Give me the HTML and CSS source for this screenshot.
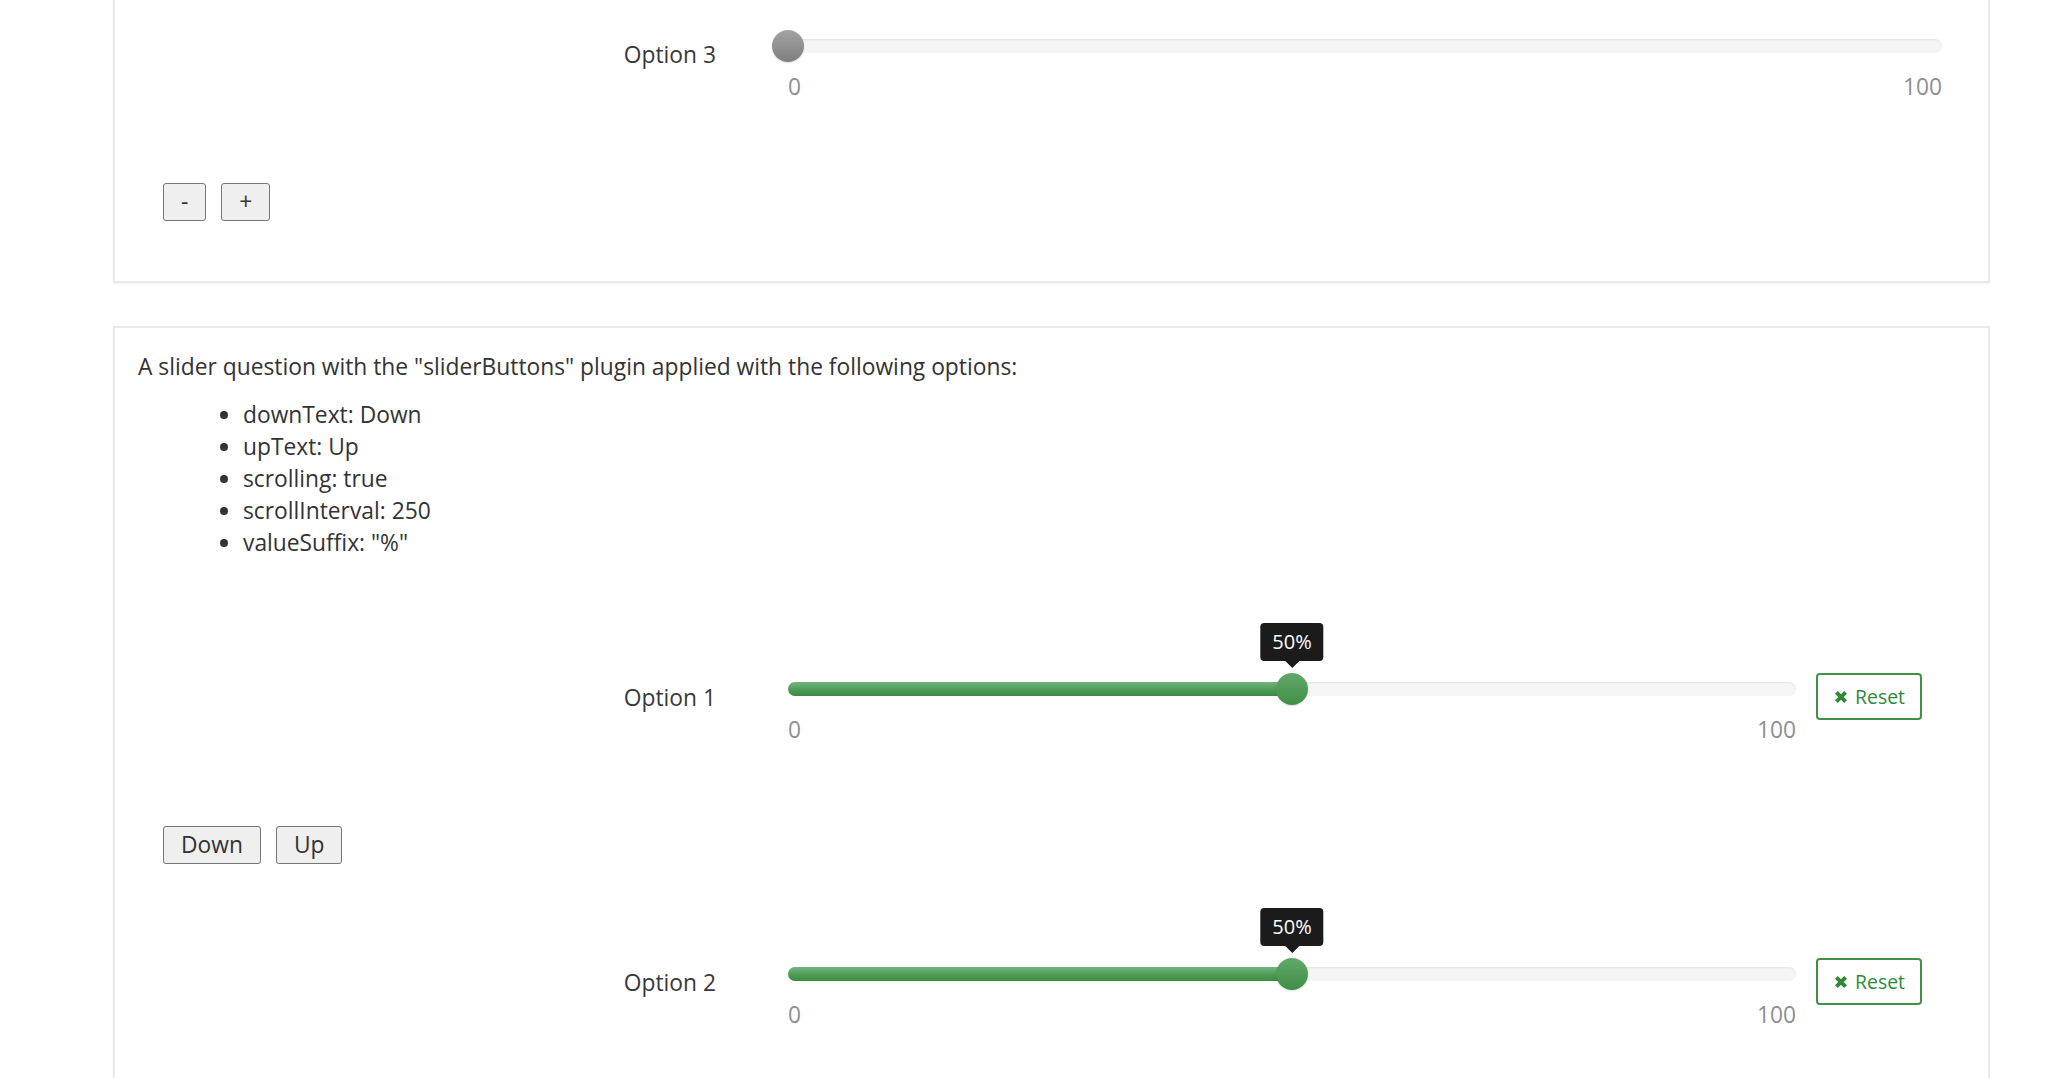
FILE: index.html
```html
<!DOCTYPE html>
<html lang="en">
<head>
<meta charset="utf-8">
<title>Slider buttons</title>
<link rel="stylesheet" href="styles.css">
</head>
<body>
<div class="page">
  <section class="card card-cut">
    <div class="item">
      <div class="row first">
        <div class="label">Option 3</div>
        <div class="slider wide">
          <div class="track-wrap">
            <div class="track"></div>
            <div class="thumb grey" style="left:0%"></div>
          </div>
          <div class="scale"><span>0</span><span>100</span></div>
        </div>
      </div>
      <div class="buttons">
        <button class="btn">-</button>
        <button class="btn">+</button>
      </div>
    </div>
  </section>

  <section class="card">
    <p class="desc">A slider question with the "sliderButtons" plugin applied with the following options:</p>
    <ul class="opts">
      <li>downText: Down</li>
      <li>upText: Up</li>
      <li>scrolling: true</li>
      <li>scrollInterval: 250</li>
      <li>valueSuffix: "%"</li>
    </ul>
    <div class="item">
      <div class="row first">
        <div class="label">Option 1</div>
        <div class="slider">
          <div class="track-wrap">
            <div class="track"><div class="fill" style="width:50%"></div></div>
            <div class="thumb" style="left:50%"><div class="tip">50%</div></div>
          </div>
          <div class="scale"><span>0</span><span>100</span></div>
        </div>
        <button class="reset"><svg class="x" viewBox="0 0 14 14" width="14" height="14"><path d="M2.4 2.4 L11.6 11.6 M11.6 2.4 L2.4 11.6" stroke="currentColor" stroke-width="4" stroke-linecap="butt" fill="none"/></svg>Reset</button>
      </div>
      <div class="buttons">
        <button class="btn">Down</button>
        <button class="btn">Up</button>
      </div>
    </div>
    <div class="item">
      <div class="row">
        <div class="label">Option 2</div>
        <div class="slider">
          <div class="track-wrap">
            <div class="track"><div class="fill" style="width:50%"></div></div>
            <div class="thumb" style="left:50%"><div class="tip">50%</div></div>
          </div>
          <div class="scale"><span>0</span><span>100</span></div>
        </div>
        <button class="reset"><svg class="x" viewBox="0 0 14 14" width="14" height="14"><path d="M2.4 2.4 L11.6 11.6 M11.6 2.4 L2.4 11.6" stroke="currentColor" stroke-width="4" stroke-linecap="butt" fill="none"/></svg>Reset</button>
      </div>
    </div>
  </section>
</div>
</body>
</html>
```

FILE: styles.css
```css
html, body {
  margin: 0;
  padding: 0;
  background: #ffffff;
}
body {
  display: flow-root;
  font-family: "Open Sans", "Noto Sans", sans-serif;
  font-size: 22.8px;
  line-height: 32px;
  color: #333333;
  overflow: hidden;
}
.page {
  padding-left: 113px;
  width: 1877px;
}
.card {
  background: #fff;
  border: 2px solid #e9e9e9;
  box-shadow: 0 1px 2px rgba(0, 0, 0, 0.06);
  padding: 23px 23px 60px 23px;
  margin-top: 43px;
}
.card-cut {
  margin-top: -60px;
}
.card-cut .row.first {
  margin-top: 65px;
}
.desc {
  margin: 0 0 16px 0;
}
.opts {
  margin: 0;
  padding-left: 105px;
}
.row {
  display: flex;
  align-items: flex-start;
  margin-top: 94px;
}
.row.first {
  margin-top: 114px;
}
.label {
  width: 578px;
  margin-right: 56px;
  margin-top: 9px;
  text-align: right;
  color: #3a3a3a;
  flex: none;
}
.slider {
  flex: 1;
  padding: 0 16px;
}
.slider.wide {
  margin-right: 7px;
}
.track-wrap {
  position: relative;
  height: 32px;
}
.track {
  position: absolute;
  left: 0;
  right: 0;
  top: 9px;
  height: 14px;
  border-radius: 7px;
  background: #f5f5f5;
  box-shadow: inset 0 1px 2px rgba(0, 0, 0, 0.08);
}
.fill {
  height: 100%;
  border-radius: 7px 0 0 7px;
  background: linear-gradient(to bottom, #74b381 0%, #4e9c57 55%, #3a8b41 100%);
}
.thumb {
  position: absolute;
  top: 0;
  width: 32px;
  height: 32px;
  margin-left: -16px;
  border-radius: 50%;
  background: linear-gradient(to bottom, #62a96b 0%, #3f8f45 100%);
  box-shadow: 0 1px 2px rgba(0, 0, 0, 0.15);
}
.thumb.grey {
  background: linear-gradient(to bottom, #a3a3a3 0%, #7f7f7f 100%);
}
.tip {
  position: absolute;
  bottom: 44px;
  left: 50%;
  transform: translateX(-50%);
  background: #1b1b1b;
  color: #fff;
  font-size: 20px;
  line-height: 28px;
  padding: 5px 12px;
  border-radius: 4px;
  white-space: nowrap;
}
.tip::after {
  content: "";
  position: absolute;
  left: 50%;
  top: 100%;
  margin-left: -7px;
  border-left: 7px solid transparent;
  border-right: 7px solid transparent;
  border-top: 7px solid #1b1b1b;
}
.scale {
  display: flex;
  justify-content: space-between;
  margin-top: 9px;
  color: #8f8f8f;
}
.reset {
  flex: none;
  display: flex;
  align-items: center;
  gap: 7px;
  margin-left: 4px;
  margin-right: 43px;
  height: 47px;
  padding: 0 15px 0 16px;
  border: 2px solid #3f9145;
  border-radius: 4px;
  background: #fff;
  color: #2f8a37;
  font-family: "Open Sans", "Noto Sans", sans-serif;
  font-size: 19.4px;
  line-height: 27px;
}
.x {
  width: 14px;
  height: 14px;
}
.buttons {
  display: flex;
  gap: 15px;
  margin-top: 80px;
  margin-left: 25px;
}
.btn {
  font-family: "Open Sans", "Noto Sans", sans-serif;
  font-size: 22.8px;
  line-height: 30px;
  color: #333;
  padding: 3px 17px;
  background: #efefef;
  border: 1px solid #767676;
  border-radius: 3px;
}
```
